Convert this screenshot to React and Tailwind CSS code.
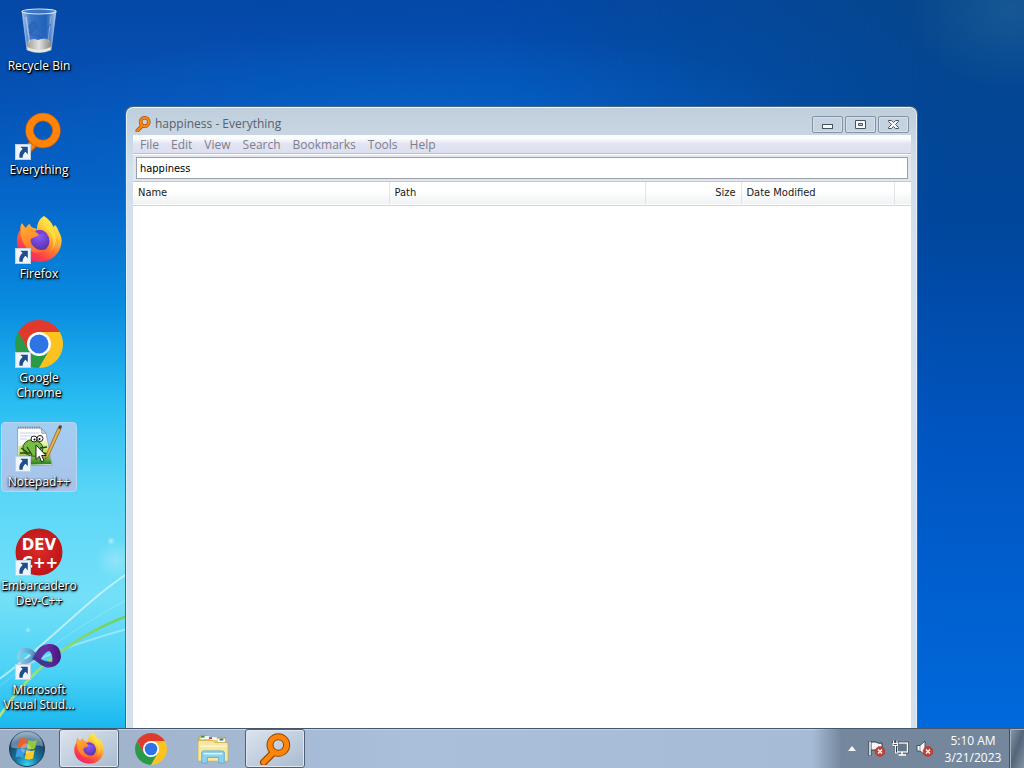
import { useState } from 'react'

const Wallpaper = () => (
  <svg className="absolute inset-0 h-full w-full" viewBox="0 0 1024 728" preserveAspectRatio="none" aria-hidden="true">
    <defs>
      <linearGradient id="sky" x1="0" y1="0" x2="0" y2="1">
        <stop offset="0" stopColor="#0549a8" />
        <stop offset="0.16" stopColor="#0455b8" />
        <stop offset="0.5" stopColor="#0560cc" />
        <stop offset="1" stopColor="#026adc" />
      </linearGradient>
      <linearGradient id="leftSky" x1="0" y1="0" x2="0" y2="1">
        <stop offset="0" stopColor="#0548a6" />
        <stop offset="0.14" stopColor="#0552b6" />
        <stop offset="0.28" stopColor="#0568cb" />
        <stop offset="0.42" stopColor="#088ce0" />
        <stop offset="0.55" stopColor="#28bcf1" />
        <stop offset="0.68" stopColor="#5ad6f7" />
        <stop offset="0.82" stopColor="#74e0f8" />
        <stop offset="0.92" stopColor="#4cd2f6" />
        <stop offset="1" stopColor="#1ab8ef" />
      </linearGradient>
      <linearGradient id="fade" x1="0" y1="0" x2="1" y2="0">
        <stop offset="0" stopColor="#fff" />
        <stop offset="0.2" stopColor="#fff" />
        <stop offset="0.7" stopColor="#000" />
      </linearGradient>
      <mask id="leftMask">
        <rect width="1024" height="728" fill="url(#fade)" />
      </mask>
      <linearGradient id="rightSky" x1="0" y1="0" x2="0" y2="1">
        <stop offset="0" stopColor="#06468c" />
        <stop offset="0.3" stopColor="#00469c" />
        <stop offset="0.6" stopColor="#0055c0" />
        <stop offset="1" stopColor="#0069dc" />
      </linearGradient>
      <linearGradient id="rightFade" x1="0" y1="0" x2="1" y2="0">
        <stop offset="0.5" stopColor="#000" />
        <stop offset="0.92" stopColor="#fff" />
      </linearGradient>
      <mask id="rightMask">
        <rect width="1024" height="728" fill="url(#rightFade)" />
      </mask>
      <radialGradient id="glow">
        <stop offset="0" stopColor="#2a6c9c" stopOpacity="0.45" />
        <stop offset="1" stopColor="#2a6c9c" stopOpacity="0" />
      </radialGradient>
      <radialGradient id="horizon">
        <stop offset="0" stopColor="#0576dc" stopOpacity="0.4" />
        <stop offset="1" stopColor="#0576dc" stopOpacity="0" />
      </radialGradient>
      <radialGradient id="spark">
        <stop offset="0" stopColor="#fff" stopOpacity="0.5" />
        <stop offset="1" stopColor="#fff" stopOpacity="0" />
      </radialGradient>
      <linearGradient id="leaf" x1="0" y1="1" x2="1" y2="0">
        <stop offset="0" stopColor="#b8ea7c" />
        <stop offset="1" stopColor="#6ccf62" />
      </linearGradient>
    </defs>
    <rect width="1024" height="728" fill="url(#sky)" />
    <rect width="1024" height="728" fill="url(#leftSky)" mask="url(#leftMask)" />
    <rect width="1024" height="728" fill="url(#rightSky)" mask="url(#rightMask)" />
    <ellipse cx="400" cy="120" rx="420" ry="90" fill="url(#horizon)" />
    <ellipse cx="1010" cy="10" rx="100" ry="80" fill="url(#glow)" />
    <g fill="none" stroke="#fff">
      <path d="M-5 682C40 652 88 598 130 572" strokeWidth="2" opacity="0.55" />
      <path d="M-5 690C30 662 70 630 130 598" strokeWidth="1" opacity="0.2" />
      <path d="M20 668C60 648 90 640 130 628" strokeWidth="2" opacity="0.35" />
    </g>
    <path d="M-4 722C16 688 58 641 130 615" fill="none" stroke="url(#leaf)" strokeWidth="2.4" />
    <circle cx="111" cy="541" r="4" fill="url(#spark)" />
    <circle cx="116" cy="560" r="20" fill="url(#spark)" opacity="0.5" />
    <circle cx="28" cy="630" r="3" fill="url(#spark)" />
  </svg>
)

const RecycleBin = () => (
  <svg viewBox="0 0 48 48" className="h-full w-full">
    <defs>
      <linearGradient id="glass" x1="0" y1="0" x2="1" y2="0">
        <stop offset="0" stopColor="#cfe3f8" stopOpacity="0.8" />
        <stop offset="0.25" stopColor="#5f93d8" stopOpacity="0.6" />
        <stop offset="0.7" stopColor="#3b78cc" stopOpacity="0.5" />
        <stop offset="1" stopColor="#e2effc" stopOpacity="0.8" />
      </linearGradient>
      <linearGradient id="binBase" x1="0" y1="0" x2="1" y2="0">
        <stop offset="0" stopColor="#a99c8c" />
        <stop offset="0.5" stopColor="#f6f1e6" />
        <stop offset="1" stopColor="#8f8478" />
      </linearGradient>
    </defs>
    <path d="M7 3L12 42Q24 47 36 42L41 3Z" fill="url(#glass)" stroke="#a9c8ea" strokeWidth="0.7" />
    <path d="M11.5 35Q16 29 23 32Q31 28 36.500 34L35.700 41Q24 47 12.300 41Z" fill="url(#binBase)" opacity="0.9" />
    <path d="M12 39Q24 45 36 39L35.500 42Q24 47 12.500 42Z" fill="#ece7dc" />
    <ellipse cx="24" cy="3.500" rx="17" ry="2.500" fill="#3b6fb8" fillOpacity="0.7" stroke="#d8e8f8" strokeWidth="1.200" />
    <path d="M14 18l5-5 4 7-4 1-3 5zM27 24l9-8M20 27l8 3M14 24l5 4" fill="#2a66bd" stroke="#2a62b2" strokeWidth="1.500" opacity="0.8" />
    <path d="M11 9L14.500 34" stroke="#fff" strokeWidth="1.500" opacity="0.45" />
    <path d="M36 8L33 34" stroke="#fff" strokeWidth="1" opacity="0.3" />
  </svg>
)

const Magnifier = () => (
  <svg viewBox="0 0 48 48" className="h-full w-full">
    <path d="M22 29L7 44" stroke="#8b4708" strokeWidth="11" strokeLinecap="round" />
    <circle cx="29" cy="18" r="12.500" fill="none" stroke="#8b4708" strokeWidth="10.500" />
    <path d="M22 29L7 44" stroke="#ff8408" strokeWidth="7.500" strokeLinecap="round" />
    <circle cx="29" cy="18" r="12.500" fill="none" stroke="#ff8408" strokeWidth="7.500" />
  </svg>
)

const EverythingIcon = () => (
  <svg viewBox="0 0 48 48" className="h-full w-full">
    <path d="M18 32L6 44" stroke="#c75b12" strokeWidth="9" strokeLinecap="round" />
    <path d="M18 32L6 44" stroke="#ff8408" strokeWidth="6.500" strokeLinecap="round" />
    <circle cx="28" cy="18.500" r="13.500" fill="none" stroke="#c75b12" strokeWidth="8.500" />
    <circle cx="28" cy="18.500" r="13.500" fill="none" stroke="#ff8408" strokeWidth="7" />
  </svg>
)

const Firefox = () => (
  <svg viewBox="0 0 48 48" className="h-full w-full">
    <defs>
      <linearGradient id="foxBody" x1="0.85" y1="0.05" x2="0.25" y2="1">
        <stop offset="0" stopColor="#fff44f" />
        <stop offset="0.3" stopColor="#ffc53a" />
        <stop offset="0.55" stopColor="#ff7a2f" />
        <stop offset="0.8" stopColor="#fb3a50" />
        <stop offset="1" stopColor="#e8286e" />
      </linearGradient>
      <radialGradient id="foxGlobe" cx="0.5" cy="0.25" r="0.8">
        <stop offset="0" stopColor="#9059ff" />
        <stop offset="1" stopColor="#4a3099" />
      </radialGradient>
      <linearGradient id="foxHead" x1="0.2" y1="0" x2="0.6" y2="1">
        <stop offset="0" stopColor="#ffb02e" />
        <stop offset="1" stopColor="#ff6a2f" />
      </linearGradient>
    </defs>
    <path
      d="M29 0C34 3 37 7 38.500 11L40 9C42 11 43 13 44 16C46.500 20 47 24 46.300 28C44.500 39 35 46 24.500 46C11.500 46 1.800 37 1.800 25.500C1.800 21 3 17.500 5 14.500C5 11.500 5.500 9 7 7C8 9.500 9 11 11 12C11.500 10 13 8.500 15 8C15 9.500 16 10.500 17.500 11.500L22 13C22 7 25 2 29 0Z"
      fill="url(#foxBody)"
    />
    <path d="M29 0C26 10 34 13 37 20C41 30 36 37 29 38C38 36 43 28 40 18C38 10 33 7 29 0Z" fill="#ffe646" opacity="0.6" />
    <circle cx="24" cy="25" r="10.500" fill="url(#foxGlobe)" />
    <path
      d="M6 14C6 11 6.500 9 7.500 7.500C8.500 10 10 11.500 12 12.500C15 11 18 13 21 16L24 18.500C22 21.500 17 21 15.500 24C16 31 24 36 31 33C26 39 16 37.500 11 31C7 25 5 20 6 14Z"
      fill="url(#foxHead)"
    />
    <path d="M20 15C24 12.500 30 14 33 19C29 16.500 27 18 24 18.500Z" fill="#7c42cf" />
  </svg>
)

const Chrome = () => (
  <svg viewBox="0 0 48 48" className="h-full w-full">
    <path d="M24 24L34.390 30L24 48A24 24 0 0 1 3.220 12L13.610 30Z" fill="#2b9a48" />
    <path d="M24 12H44.780A24 24 0 0 0 3.220 12L13.610 30L24 24Z" fill="#e03a2d" />
    <path d="M24 12H44.780A24 24 0 0 1 24 48L34.390 30Z" fill="#fcc31e" />
    <circle cx="24" cy="24" r="12" fill="#fff" />
    <circle cx="24" cy="24" r="9.500" fill="#2f74e4" />
  </svg>
)

const NotepadPlus = () => (
  <svg viewBox="0 0 48 48" className="h-full w-full">
    <defs>
      <linearGradient id="grass" x1="0" y1="0" x2="0" y2="1">
        <stop offset="0" stopColor="#f4f9d2" />
        <stop offset="0.5" stopColor="#b9df4e" />
        <stop offset="1" stopColor="#1d7a22" />
      </linearGradient>
    </defs>
    <path d="M2.500 4H26L31 9L37 41L3 42Z" fill="#fdfdfd" stroke="#8b98a6" strokeWidth="0.8" />
    <path d="M26 4L27 9.500L31 9Z" fill="#ccd6e2" stroke="#7f8c9c" strokeWidth="0.700" />
    <path d="M3 3.500H26" stroke="#74808c" strokeWidth="2" strokeDasharray="1 1.300" />
    <path d="M5 9H24M5 12H17M5 15H12" stroke="#b6c8df" strokeWidth="0.800" />
    <path d="M3.500 22L32 16L36.500 40L4 41Z" fill="url(#grass)" />
    <path d="M8 22Q12 13 22 17Q30 20 27 29Q20 35 11 30Q7 27 8 22Z" fill="#75bd43" stroke="#27591c" strokeWidth="1" />
    <path d="M5 29H15M6 24L12 28M12 23L17 31M25 24L32 23M24 28L33 30" stroke="#27421a" strokeWidth="1.300" />
    <circle cx="19" cy="15" r="3" fill="#fff" stroke="#222" strokeWidth="1" />
    <circle cx="25" cy="14.500" r="3" fill="#fff" stroke="#222" strokeWidth="1" />
    <circle cx="19.500" cy="15.500" r="1" />
    <circle cx="24.500" cy="15" r="1" />
    <path d="M31 31L43 4L46 5L33.500 32L30.500 35Z" fill="#efb13c" stroke="#7a5a22" strokeWidth="0.700" />
    <path d="M43 4L44 1.500Q46 0.500 47 2.500L46 5Z" fill="#5b3d36" />
  </svg>
)

const DevCpp = () => (
  <svg viewBox="0 0 48 48" className="h-full w-full">
    <defs>
      <radialGradient id="devRed" cx="0.5" cy="0.45" r="0.6">
        <stop offset="0" stopColor="#dc2a28" />
        <stop offset="1" stopColor="#b91316" />
      </radialGradient>
    </defs>
    <circle cx="24" cy="24" r="23.500" fill="url(#devRed)" />
    <g fill="#fff" fontFamily="'DejaVu Sans', sans-serif" fontWeight="bold" fontSize="15" textAnchor="middle">
      <text x="24" y="22">DEV</text>
      <text x="25" y="40">C++</text>
    </g>
  </svg>
)

const VisualStudio = () => (
  <svg viewBox="0 -4 48 48" className="h-full w-full">
    <defs>
      <linearGradient id="vsLoop" x1="0" y1="0" x2="1" y2="0">
        <stop offset="0" stopColor="#4a3a93" />
        <stop offset="0.5" stopColor="#6a2da0" />
        <stop offset="1" stopColor="#43177d" />
      </linearGradient>
      <linearGradient id="vsTail" x1="0" y1="0" x2="1" y2="0">
        <stop offset="0" stopColor="#9fd3ea" />
        <stop offset="0.6" stopColor="#5a93c4" />
        <stop offset="1" stopColor="#272a66" />
      </linearGradient>
    </defs>
    <path
      fillRule="evenodd"
      d="M20 22C13 32 2 28 2 20C3 10 14 10 20 16L26 22L22 26ZM16 20C13 15 6 16 5 20C7 24 13 24 16 20Z"
      fill="url(#vsTail)"
      opacity="0.85"
    />
    <path
      fillRule="evenodd"
      d="M17 23C21 18 23 9 33 8C42 7 46 13 46 21C45 29 37 33 30 31C25 29 22 25 17 23ZM26 23C30 26 34 27 37 26C38 23 37 16 34 15C31 16 29 18 26 23Z"
      fill="url(#vsLoop)"
    />
    <path d="M18 19L26 24L37 26L34 30L26 29Z" fill="#343c86" opacity="0.8" />
  </svg>
)

const ShortcutArrow = () => (
  <svg viewBox="0 0 15 15" className="absolute bottom-0 left-0 h-4 w-4">
    <rect x="0.500" y="0.500" width="14" height="14" fill="#eef5fb" stroke="#c3d3e0" />
    <path d="M5 2.500H12V9.500L9.800 7.300C8 9 7.200 10.700 7.200 13H4.200C3.500 9.500 4.800 6.500 7.200 4.700Z" fill="#1f4d8c" />
  </svg>
)

const Explorer = () => (
  <svg viewBox="0 0 34 34" className="h-full w-full">
    <path d="M2 5Q2 3 4 3H11L13 5H30V26H2Z" fill="#e9cf72" stroke="#b89a48" strokeWidth="0.800" />
    <path d="M4 5H13M14 6H21M22 8H30" stroke="#fff" strokeWidth="3" />
    <path d="M4 4h4" stroke="#2f9e4a" strokeWidth="2" />
    <path d="M13 5.500h3" stroke="#d43c24" strokeWidth="2" />
    <path d="M24 7h4" stroke="#2a75c4" strokeWidth="2" />
    <path d="M1 10Q1 8 3 8H17L19 10H32Q33 10 33 12V30H1Z" fill="#f6e8a0" stroke="#c4a953" strokeWidth="0.800" />
    <path d="M3 14H31" stroke="#fff8d0" strokeWidth="1.500" />
    <path d="M5 21Q5 19 8 19H26Q29 19 29 21V32H23V26H11V32H5Z" fill="#8fd0ec" stroke="#5fb0d6" />
    <path d="M7 22H27" stroke="#dff4fd" strokeWidth="1.500" />
  </svg>
)

const StartOrb = () => (
  <svg viewBox="0 0 40 40" className="h-10 w-10">
    <defs>
      <radialGradient id="orb" cx="0.5" cy="0.95" r="0.95">
        <stop offset="0" stopColor="#37d5f4" />
        <stop offset="0.35" stopColor="#17779d" />
        <stop offset="0.75" stopColor="#194467" />
        <stop offset="1" stopColor="#7ea1b8" />
      </radialGradient>
    </defs>
    <circle cx="20" cy="20" r="17.500" fill="url(#orb)" stroke="#1f3b56" strokeWidth="1" />
    <path d="M4 18A16 16 0 0 1 36 18C30 13 12 23 4 18Z" fill="#d4e7f3" opacity="0.4" />
    <path d="M12.500 10C15 8.500 17.500 9 20 10.500L18.300 19C15.500 17.500 13 17.500 10.500 18.500Z" fill="#ea5f2c" />
    <path d="M21.500 11C24 12.500 27 12.300 30 11L28 19.500C25 20.800 22.500 20.500 19.800 19.300Z" fill="#91c83e" />
    <path d="M10 20C12.500 19 15 19 17.900 20.500L16.100 29C13.500 27.500 11 27.300 8.500 28.500Z" fill="#3d9ce0" />
    <path d="M19.500 21C22 22.300 24.500 22.300 27.700 21L26 29.500C23 31 20 30.500 17.700 29.500Z" fill="#fcc928" />
    <circle cx="19" cy="19.500" r="5" fill="#fff" opacity="0.25" />
  </svg>
)

const ErrorBadge = () => (
  <g>
    <circle cx="12" cy="11.500" r="4.900" fill="#d23a30" stroke="#a8302a" strokeWidth="0.500" />
    <path d="M10 9.500L14 13.500M14 9.500L10 13.500" stroke="#fff" strokeWidth="1.600" />
  </g>
)

const FlagIcon = () => (
  <svg viewBox="0 0 17 17" className="h-[17px] w-[17px]">
    <path d="M2 1V16" stroke="#303c48" strokeWidth="3" />
    <path d="M3 2H8Q10 4 14 3V11Q10 12 8 10H3Z" fill="#f4f6f8" stroke="#303c48" strokeWidth="1" />
    <path d="M2 1.500V15.500" stroke="#fff" strokeWidth="1.500" />
    <ErrorBadge />
  </svg>
)

const NetworkIcon = () => (
  <svg viewBox="0 0 17 17" className="h-[17px] w-[17px]">
    <rect x="5" y="3" width="10.500" height="9" fill="#5d6c7b" stroke="#303c48" strokeWidth="2.600" />
    <rect x="5" y="3" width="10.500" height="9" fill="#65788b" stroke="#fff" strokeWidth="1.300" />
    <path d="M10 12V15M6.500 15H14" stroke="#fff" strokeWidth="1.500" />
    <path d="M0.500 1H6V5L4.500 7V13H2.500V7L0.500 5Z" fill="#43515f" stroke="#303c48" strokeWidth="1" />
    <path d="M1.500 0.500V3M5 0.500V3M1 3.500H5.500V5.500H1ZM3.300 6V13H6" fill="none" stroke="#fff" strokeWidth="1.200" />
  </svg>
)

const VolumeIcon = () => (
  <svg viewBox="0 0 17 17" className="h-[17px] w-[17px]">
    <path d="M1 5.500H4L9 1V15L4 11H1Z" fill="#f8f9fa" stroke="#44505d" strokeWidth="1" />
    <path d="M4 6V11" stroke="#8e9aa6" />
    <ErrorBadge />
  </svg>
)

const Cursor = () => (
  <svg viewBox="0 0 12 19" className="absolute top-5 left-5 h-[19px] w-3">
    <path d="M1 1V15.500L4.300 12.300L6.500 17.800L9 16.700L6.700 11.500H11Z" fill="#fff" stroke="#111" strokeWidth="0.900" />
  </svg>
)

const shortcuts = [
  { label: 'Recycle Bin', icon: <RecycleBin />, arrow: false },
  { label: 'Everything', icon: <EverythingIcon />, arrow: true },
  { label: 'Firefox', icon: <Firefox />, arrow: true },
  { label: 'Google Chrome', icon: <Chrome />, arrow: true },
  { label: 'Notepad++', icon: <NotepadPlus />, arrow: true, selected: true },
  { label: 'Embarcadero Dev-C++', icon: <DevCpp />, arrow: true },
  { label: 'Microsoft Visual Stud...', icon: <VisualStudio />, arrow: true },
]

const DesktopIcon = ({ label, icon, arrow, selected }) => (
  <li className="h-26">
    <button
      className={`flex w-[76px] flex-col items-center gap-0.5 rounded-sm border pt-px pb-0.5 ${
        selected ? 'border-[#b4d8f2] bg-linear-to-b from-[#a2cef2] to-[#a9c2e8]' : 'border-transparent'
      }`}
    >
      <span className="relative block h-12 w-12">
        {icon}
        {arrow && <ShortcutArrow />}
        {selected && <Cursor />}
      </span>
      <span className="text-center text-xs leading-[15px] text-white [text-shadow:1px_1px_2px_#000,0_1px_3px_#000,1px_1px_1px_#000]">
        {label}
      </span>
    </button>
  </li>
)

const CaptionButton = ({ label, children }) => (
  <button
    aria-label={label}
    className="flex h-[17px] w-[31px] items-center justify-center rounded-xs border border-[#8492a3] bg-[#c5d3e0] shadow-[inset_0_0_0_1px_#d5e0ea]"
  >
    <svg viewBox="0 0 13 11" className="h-[11px] w-[13px]" fill="#f6f8fa" stroke="#465260">
      {children}
    </svg>
  </button>
)

const menus = ['File', 'Edit', 'View', 'Search', 'Bookmarks', 'Tools', 'Help']

const SearchWindow = () => {
  const [query, setQuery] = useState('happiness')

  return (
    <section className="absolute top-[106px] bottom-0 left-[125px] flex w-[793px] flex-col rounded-t-lg border border-b-0 border-[#47657f] bg-linear-to-b from-[#bfcedb] to-[#d4e1ed] to-10% pr-1.5 pl-[7px] shadow-[inset_0_1px_0_#eef4f9,inset_1px_0_0_#e4eef6,inset_-1px_0_0_#e4eef6]">
      <header className="flex h-7 items-center gap-1 px-0.5 pt-1.5">
        <span className="h-4 w-4">
          <Magnifier />
        </span>
        <h1 className="flex-1 text-xs text-[#56616e]">happiness - Everything</h1>
        <div className="flex gap-0.5">
          <CaptionButton label="Minimize">
            <rect x="1.500" y="5.500" width="10" height="4" />
          </CaptionButton>
          <CaptionButton label="Maximize">
            <path fillRule="evenodd" d="M1.500 1.500H11.500V9.500H1.500ZM4.500 4.500V6.500H8.500V4.500Z" />
          </CaptionButton>
          <CaptionButton label="Close">
            <path d="M1.500 1.500H4.500L6.500 3.500L8.500 1.500H11.500V2.500L8.500 5.500L11.500 8.500V9.500H8.500L6.500 7.500L4.500 9.500H1.500V8.500L4.500 5.500L1.500 2.500Z" />
          </CaptionButton>
        </div>
      </header>

      <div className="flex flex-1 flex-col bg-[#e2e6ef]">
        <nav className="flex h-[19px] items-center border-b border-[#bcc1cf] bg-linear-to-b from-[#fbfcfe] from-20% via-[#e2e4f2] via-50% to-[#dcdff0] pt-0.5 pl-px">
          {menus.map(menu => (
            <button key={menu} className="px-1.5 text-xs leading-4 text-[#7d7f8b]">
              {menu}
            </button>
          ))}
        </nav>

        <div className="border-t border-b border-t-white border-b-[#c3c8d0] px-[3px] pt-0.5 pb-0.5">
          <input
            type="text"
            aria-label="Search"
            value={query}
            onChange={(e) => setQuery(e.target.value)}
            className="block h-[22px] w-full border border-[#9aa0ab] bg-white px-[3px] font-['DejaVu_Sans_Condensed','DejaVu_Sans',sans-serif] text-[11px] text-black outline-none"
          />
        </div>

        <div className="flex-1 bg-white">
          <table className="w-full table-fixed border-collapse font-['DejaVu_Sans_Condensed','DejaVu_Sans',sans-serif] text-[11px] text-[#1a1a1a]">
            <thead>
              <tr className="h-[23px] border-b border-[#d5d5d5] bg-linear-to-b from-white from-40% to-[#f1f2f4]">
                <th scope="col" className="w-64 border-r border-[#e2e5e8] px-[5px] text-left font-normal">Name</th>
                <th scope="col" className="w-64 border-r border-[#e2e5e8] px-[5px] text-left font-normal">Path</th>
                <th scope="col" className="w-24 border-r border-[#e2e5e8] px-[5px] text-right font-normal">Size</th>
                <th scope="col" className="w-[153px] border-r border-[#e2e5e8] px-[5px] text-left font-normal">Date Modified</th>
                <td />
              </tr>
            </thead>
          </table>
        </div>
      </div>
    </section>
  )
}

const TaskButton = ({ label, active, children }) => (
  <button
    aria-label={label}
    className={`flex h-[39px] w-15 items-center justify-center rounded-[3px] border ${
      active
        ? 'border-[#4f6074] bg-linear-to-br from-[#dce4ee] to-[#a9bbd0] shadow-[inset_0_0_0_1px_#dfe8f1]'
        : 'border-transparent'
    }`}
  >
    <span className="h-8 w-8">{children}</span>
  </button>
)

const Taskbar = () => (
  <footer className="relative flex h-10 shrink-0 items-stretch border-t border-[#45566a] bg-linear-to-r from-[#9dafc6] via-[#a9bfda] via-40% to-[#a6bcd6] to-80% shadow-[inset_0_1px_0_#c4d3e3]">
    <button aria-label="Start" className="mr-[5px] flex w-[54px] items-center justify-center">
      <StartOrb />
    </button>
    <div className="flex flex-1 items-start gap-0.5">
      <TaskButton label="Firefox" active>
        <Firefox />
      </TaskButton>
      <TaskButton label="Google Chrome">
        <Chrome />
      </TaskButton>
      <TaskButton label="Windows Explorer">
        <Explorer />
      </TaskButton>
      <TaskButton label="Everything" active>
        <Magnifier />
      </TaskButton>
    </div>
    <div className="flex items-center bg-linear-to-r from-transparent to-[#74879d] to-15% pl-8">
      <button aria-label="Show hidden icons" className="mr-2 p-1">
        <svg viewBox="0 0 8 5" className="h-[5px] w-2">
          <path d="M0 5L4 0L8 5Z" fill="#f5f8fb" />
        </svg>
      </button>
      <div className="mr-1 flex gap-[7px]">
        <FlagIcon />
        <NetworkIcon />
        <VolumeIcon />
      </div>
      <time className="w-[72px] text-center text-xs leading-[17px] text-white">
        5:10 AM
        <br />
        3/21/2023
      </time>
    </div>
    <button
      aria-label="Show desktop"
      className="w-[15px] border-l border-[#3f4f60] bg-linear-to-br from-[#8c9bac] via-[#53657a] to-[#8494a6] shadow-[inset_1px_1px_0_#a5b2c0]"
    />
  </footer>
)

export default function App() {
  return (
    <div className="flex h-screen flex-col overflow-hidden font-['Open_Sans','Noto_Sans',sans-serif]">
      <main className="relative min-h-0 flex-1 overflow-hidden">
        <Wallpaper />
        <ul className="relative flex flex-col pt-1.5 pl-px">
          {shortcuts.map(item => (
            <DesktopIcon key={item.label} {...item} />
          ))}
        </ul>
        <SearchWindow />
      </main>
      <Taskbar />
    </div>
  )
}
